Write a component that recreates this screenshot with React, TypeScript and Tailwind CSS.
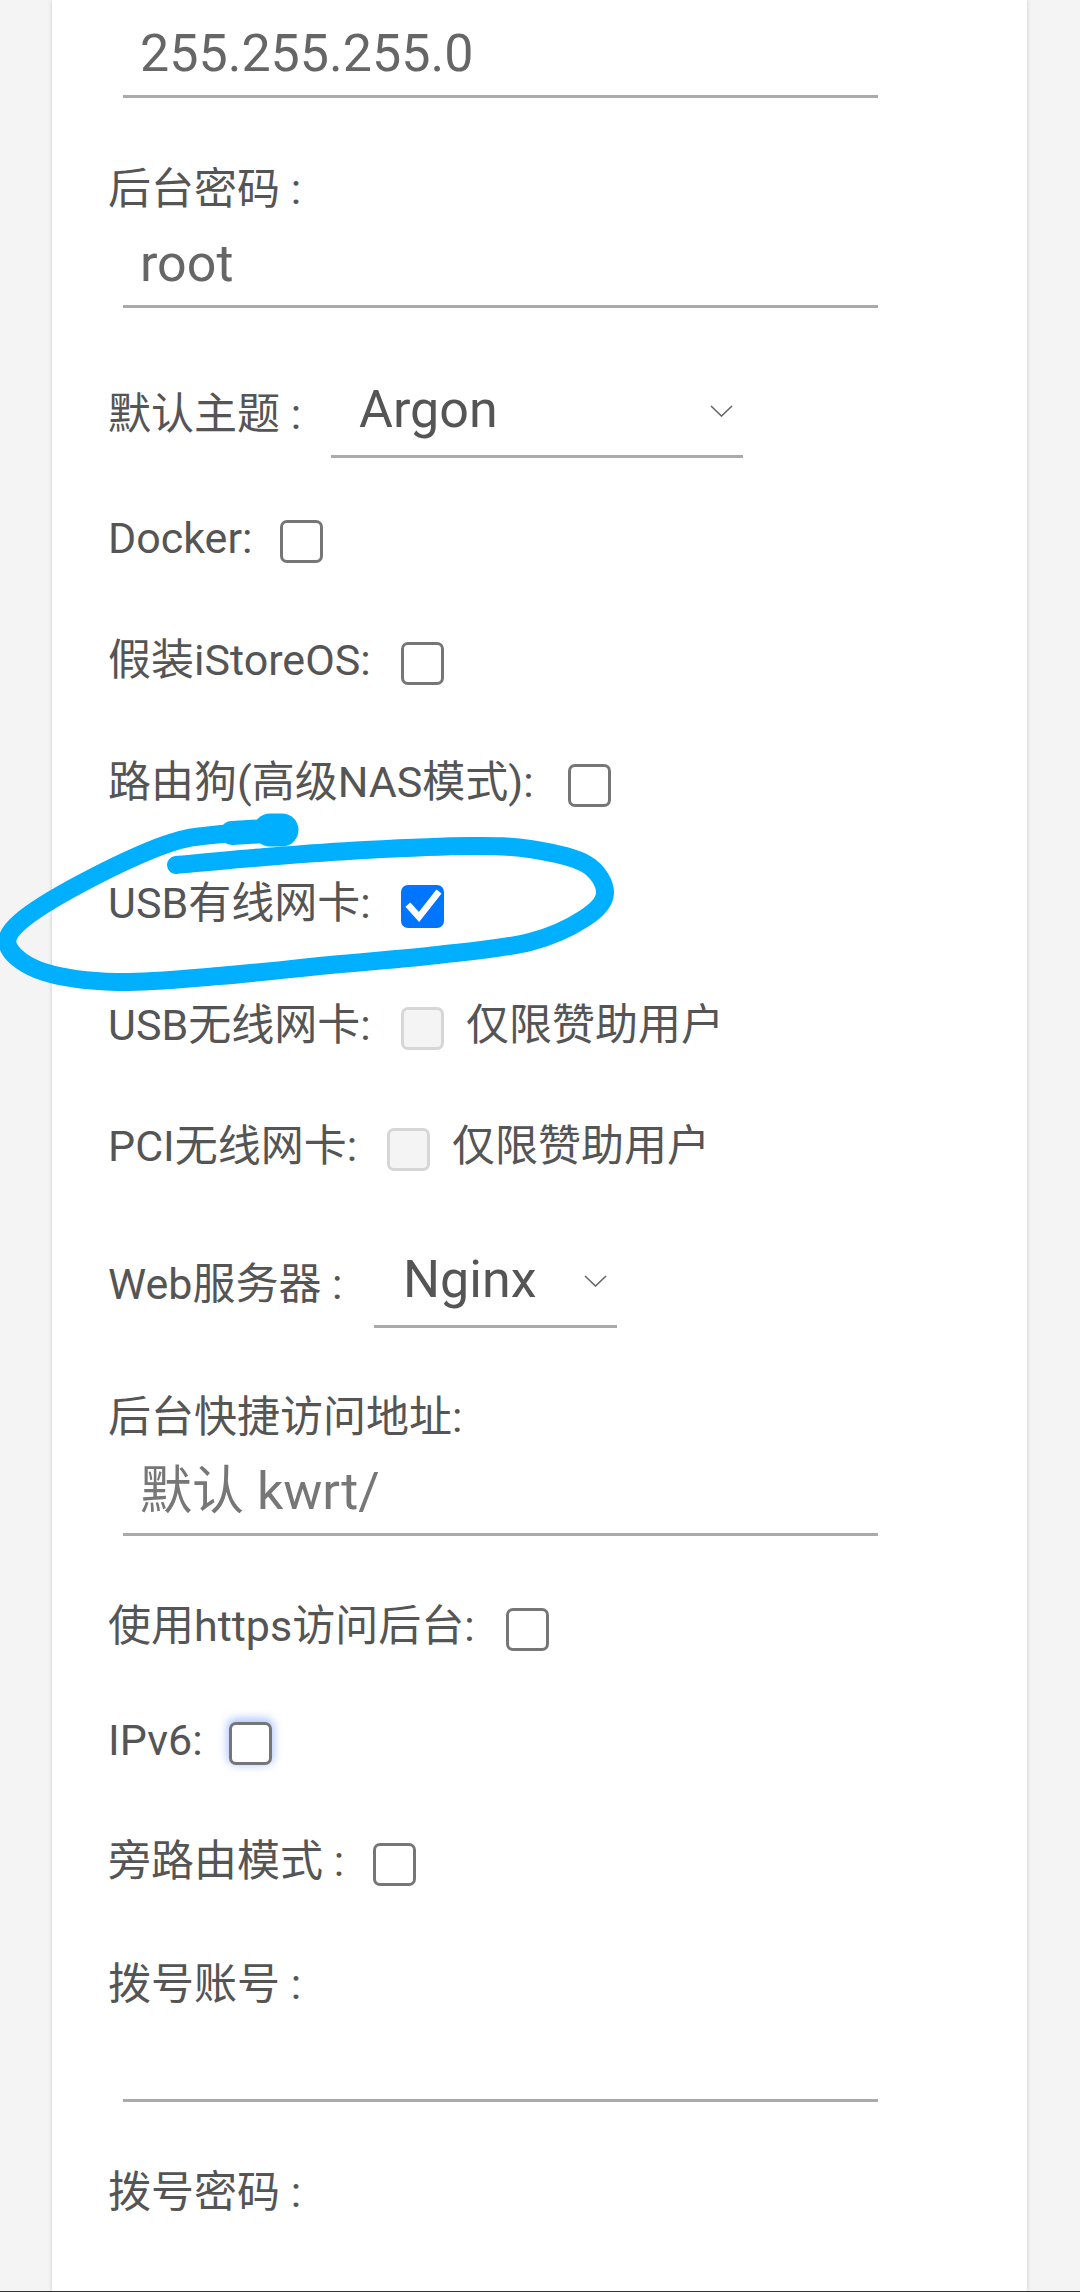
import React from "react";

type Pt = [number, number];

function smoothPath(pts: Pt[]): string {
  let d = `M ${pts[0][0]} ${pts[0][1]}`;
  for (let i = 0; i < pts.length - 1; i++) {
    const p0 = pts[i - 1] || pts[i];
    const p1 = pts[i];
    const p2 = pts[i + 1];
    const p3 = pts[i + 2] || p2;
    const c1x = p1[0] + (p2[0] - p0[0]) / 6;
    const c1y = p1[1] + (p2[1] - p0[1]) / 6;
    const c2x = p2[0] - (p3[0] - p1[0]) / 6;
    const c2y = p2[1] - (p3[1] - p1[1]) / 6;
    d += ` C ${c1x.toFixed(1)} ${c1y.toFixed(1)}, ${c2x.toFixed(1)} ${c2y.toFixed(1)}, ${p2[0]} ${p2[1]}`;
  }
  return d;
}

const loop: Pt[] = [
  [282, 830],
  [222, 834],
  [167, 844],
  [82, 883],
  [20, 922],
  [9, 948],
  [44, 972],
  [117, 982],
  [219, 976],
  [330, 965],
  [438, 955],
  [530, 942],
  [585, 918],
  [605, 893],
  [586, 864],
  [530, 849],
  [470, 846],
  [365, 850],
  [265, 857],
  [176, 865],
];

function Underline({ children, className }: { children?: React.ReactNode; className: string }) {
  return (
    <div className={`ml-[15px] w-[755px] pl-[17px] pb-[15px] border-b-[3px] border-[#aaaaaa] ${className}`}>
      <div className="h-[52px] text-[52px] leading-none whitespace-nowrap">{children}</div>
    </div>
  );
}

function Label({ children, className }: { children: React.ReactNode; className: string }) {
  return <div className={`text-[43px] leading-none whitespace-nowrap text-[#555555] ${className}`}>{children}</div>;
}

function Chevron() {
  return (
    <svg width="23" height="12" viewBox="0 0 23 12" className="mt-[21px] shrink-0">
      <polyline points="1,1 11.5,11 22,1" fill="none" stroke="#666666" strokeWidth="1.6" />
    </svg>
  );
}

function Box({ kind }: { kind: "off" | "on" | "disabled" | "focus" }) {
  if (kind === "on") {
    return (
      <div className="mt-[3px] w-[43px] h-[43px] rounded-[7px] bg-[#0075ff] shrink-0">
        <svg width="43" height="43" viewBox="0 0 43 43">
          <polyline points="9,22 18,32 36,9" fill="none" stroke="#ffffff" strokeWidth="6.5" strokeLinecap="square" />
        </svg>
      </div>
    );
  }
  if (kind === "disabled") {
    return <div className="mt-[3px] w-[43px] h-[43px] rounded-[7px] border-[3px] border-[#d6d6d6] bg-[#f4f4f4] shrink-0" />;
  }
  if (kind === "focus") {
    return (
      <div className="mt-[3px] w-[43px] h-[43px] rounded-[7px] border-[3px] border-[#767676] bg-white shrink-0 shadow-[0_-2px_8px_2px_rgba(80,130,255,0.45)]" />
    );
  }
  return <div className="mt-[3px] w-[43px] h-[43px] rounded-[7px] border-[3px] border-[#767676] bg-white shrink-0" />;
}

function CheckRow({
  label,
  labelW,
  mt,
  kind,
  extra,
}: {
  label: string;
  labelW: string;
  mt: string;
  kind: "off" | "on" | "disabled" | "focus";
  extra?: string;
}) {
  return (
    <div className={`flex items-start h-[46px] ${mt}`}>
      <Label className={labelW}>{label}</Label>
      <Box kind={kind} />
      {extra && <Label className="ml-[22px]">{extra}</Label>}
    </div>
  );
}

export default function App() {
  const d = smoothPath(loop);
  return (
    <div className="relative w-[1080px] h-[2292px] overflow-hidden bg-[#f4f4f4] flex flex-col font-[family-name:Roboto,'Noto_Sans_CJK_SC',sans-serif]">
      <div className="flex-1 ml-[52px] w-[975px] bg-white shadow-[0_0_4px_rgba(0,0,0,0.18)] pl-[56px] pt-[28px] flex flex-col">
        <Underline className="text-[#666666]">255.255.255.0</Underline>

        <Label className="mt-[70px]">后台密码 :</Label>
        <Underline className="mt-[27px] text-[#666666]">root</Underline>

        <div className="flex items-start mt-[76px]">
          <Label className="w-[223px] mt-[9px]">默认主题 :</Label>
          <div className="w-[412px] pl-[28px] pr-[10px] pb-[19px] border-b-[3px] border-[#aaaaaa] flex items-start justify-between">
            <div className="h-[52px] text-[52px] leading-none text-[#555555]">Argon</div>
            <Chevron />
          </div>
        </div>

        <CheckRow label="Docker:" labelW="w-[172px]" mt="mt-[59px]" kind="off" />
        <CheckRow label="假装iStoreOS:" labelW="w-[293px]" mt="mt-[76px]" kind="off" />
        <CheckRow label="路由狗(高级NAS模式):" labelW="w-[460px]" mt="mt-[76px]" kind="off" />
        <CheckRow label="USB有线网卡:" labelW="w-[293px]" mt="mt-[75px]" kind="on" />
        <CheckRow label="USB无线网卡:" labelW="w-[293px]" mt="mt-[76px]" kind="disabled" extra="仅限赞助用户" />
        <CheckRow label="PCI无线网卡:" labelW="w-[279px]" mt="mt-[75px]" kind="disabled" extra="仅限赞助用户" />

        <div className="flex items-start mt-[83px]">
          <Label className="w-[266px] mt-[9px]">Web服务器 :</Label>
          <div className="w-[243px] pl-[29px] pr-[10px] pb-[19px] border-b-[3px] border-[#aaaaaa] flex items-start justify-between">
            <div className="h-[52px] text-[52px] leading-none text-[#555555]">Nginx</div>
            <Chevron />
          </div>
        </div>

        <Label className="mt-[68px]">后台快捷访问地址:</Label>
        <Underline className="mt-[27px] text-[#777777]">默认 kwrt/</Underline>

        <CheckRow label="使用https访问后台:" labelW="w-[398px]" mt="mt-[69px]" kind="off" />
        <CheckRow label="IPv6:" labelW="w-[121px]" mt="mt-[68px]" kind="focus" />
        <CheckRow label="旁路由模式 :" labelW="w-[265px]" mt="mt-[75px]" kind="off" />

        <Label className="mt-[77px]">拨号账号 :</Label>
        <Underline className="mt-[26px] text-[#666666]" />

        <Label className="mt-[69px]">拨号密码 :</Label>
      </div>
      <div className="h-[1px] bg-[#333333]" />

      <svg className="absolute inset-0 pointer-events-none" width="1080" height="2292" viewBox="0 0 1080 2292">
        <path d={d} fill="none" stroke="#00affe" strokeWidth="18" strokeLinecap="round" strokeLinejoin="round" />
        <path d="M 282 830 L 232 833" fill="none" stroke="#00affe" strokeWidth="24" strokeLinecap="round" />
        <path d="M 282 830 L 270 830" fill="none" stroke="#00affe" strokeWidth="33" strokeLinecap="round" />
      </svg>
    </div>
  );
}
